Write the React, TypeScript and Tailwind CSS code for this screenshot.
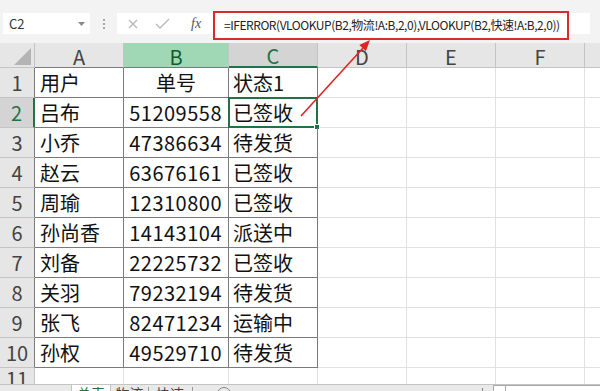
import React from "react";

const data: string[][] = [
  ["用户", "单号", "状态1"],
  ["吕布", "51209558", "已签收"],
  ["小乔", "47386634", "待发货"],
  ["赵云", "63676161", "已签收"],
  ["周瑜", "12310800", "已签收"],
  ["孙尚香", "14143104", "派送中"],
  ["刘备", "22225732", "已签收"],
  ["关羽", "79232194", "待发货"],
  ["张飞", "82471234", "运输中"],
  ["孙权", "49529710", "待发货"],
];

function Toolbar() {
  return (
    <div className="flex h-[43px] items-start bg-[#f3f3f3] pl-[3px] pt-[13px]">
      <div className="flex h-[21px] w-[87px] items-center justify-between bg-white pl-[6px] pr-[5px] text-[13px] text-[#333]">
        <span>C2</span>
        <svg width="7" height="4" viewBox="0 0 7 4">
          <polygon points="0,0 7,0 3.5,4" fill="#8a8a8a" />
        </svg>
      </div>
      <div className="flex h-[21px] w-[27px] flex-col items-center justify-center gap-[2px]">
        <div className="h-[2px] w-[2px] bg-[#a8a8a8]" />
        <div className="h-[2px] w-[2px] bg-[#a8a8a8]" />
        <div className="h-[2px] w-[2px] bg-[#a8a8a8]" />
      </div>
      <div className="flex h-[21px] w-[473px] items-center bg-white">
        <svg className="ml-[11px]" width="10" height="10" viewBox="0 0 10 10">
          <path d="M1 1 L9 9 M9 1 L1 9" stroke="#b8b8b8" strokeWidth="1.3" fill="none" />
        </svg>
        <svg className="ml-[17px]" width="15" height="11" viewBox="0 0 15 11">
          <path d="M1 6 L5 10 L14 1" stroke="#b8b8b8" strokeWidth="1.3" fill="none" />
        </svg>
        <span className="ml-[21px] w-[10px] font-['Liberation_Serif',serif] text-[14px] italic leading-none text-[#555]">
          fx
        </span>
        <div className="-mt-[2px] ml-[12px] flex h-[29px] w-[356px] items-center self-start overflow-hidden border-2 border-[#d92b2b] bg-white pb-[2px] pl-[9px] text-[12px] tracking-[-0.45px] whitespace-nowrap text-[#222]">
          =IFERROR(VLOOKUP(B2,物流!A:B,2,0),VLOOKUP(B2,快速!A:B,2,0))
        </div>
      </div>
    </div>
  );
}

function Grid() {
  const cols = ["A", "B", "C", "D", "E", "F"];
  return (
    <div className="h-[341px] overflow-hidden">
      <div className="grid grid-cols-[35px_89px_105px_89px_89px_89px_89px_15px] grid-rows-[25px_repeat(11,30px)]">
        {/* header row */}
        <div className="flex items-end justify-end border-r border-b border-[#c4c4c4] bg-[#e6e6e6] pr-[2px] pb-[2px]">
          <svg width="18" height="18" viewBox="0 0 18 18">
            <polygon points="0,18 17,18 17,1" fill="#b4b4b4" />
          </svg>
        </div>
        {cols.map((c) => {
          let cls =
            "flex items-center justify-center text-[20px] leading-none border-r border-r-[#c4c4c4] border-b bg-[#e6e6e6] text-[#444] border-b-[#c4c4c4]";
          if (c === "A") cls = "flex items-center justify-center text-[20px] leading-none border-r border-r-[#c4c4c4] border-b border-b-[#7a7a7a] bg-[#e6e6e6] text-[#444]";
          if (c === "B") cls = "flex items-center justify-center text-[20px] leading-none border-r border-r-[#c4c4c4] border-b border-b-[#7a7a7a] bg-[#a0d7b5] text-[#0d5c2f]";
          if (c === "C") cls = "flex items-center justify-center text-[20px] leading-none border-r border-r-[#c4c4c4] border-b-2 border-b-[#217346] bg-[#d4d4d4] text-[#217346]";
          return (
            <div key={c} className={cls}>
              <span className="pt-[3px]">{c}</span>
            </div>
          );
        })}
        <div className="border-b border-[#c4c4c4] bg-[#e6e6e6]" />

        {/* rows */}
        {Array.from({ length: 11 }).map((_, ri) => {
          const r = ri + 1;
          const row = data[ri];
          let hcls =
            "flex items-center justify-center text-[20px] leading-none bg-[#e6e6e6] text-[#444] border-b border-b-[#c4c4c4] border-r border-r-[#7a7a7a]";
          if (r === 2)
            hcls =
              "flex items-center justify-center text-[20px] leading-none bg-[#d4d4d4] text-[#217346] border-b border-b-[#c4c4c4] border-r-2 border-r-[#217346]";
          if (r === 11)
            hcls =
              "flex items-start justify-center text-[20px] leading-none bg-[#e6e6e6] text-[#444] border-r border-r-[#c4c4c4]";
          return (
            <React.Fragment key={r}>
              <div className={hcls}>
                <span className="pt-[1px]">{r}</span>
              </div>
              {[0, 1, 2].map((ci) => {
                if (!row) {
                  return <div key={ci} className="border-r border-b border-[#e1e1e1]" />;
                }
                const val = row[ci];
                let align = "justify-start pl-[5px]";
                if (ci === 1) align = r === 1 ? "justify-center" : "justify-end pr-[6px] tracking-[0.5px]";
                if (ci === 2) align = "justify-start pl-[4px]";
                const active = r === 2 && ci === 2;
                return (
                  <div
                    key={ci}
                    className={`relative flex items-center border-r border-b border-[#7a7a7a] text-[20px] leading-none whitespace-nowrap text-[#111] ${align}`}
                  >
                    <span>{val}</span>
                    {active && (
                      <div className="pointer-events-none absolute -top-[1px] -right-[1px] -bottom-[1px] -left-[1px] border-2 border-[#217346]">
                        <div className="absolute -right-[4px] -bottom-[4px] h-[6px] w-[6px] border border-white bg-[#217346]" />
                      </div>
                    )}
                  </div>
                );
              })}
              <div className="border-r border-b border-[#e1e1e1]" />
              <div className="border-r border-b border-[#e1e1e1]" />
              <div className="border-r border-b border-[#e1e1e1]" />
              <div className="border-b border-[#e1e1e1]" />
            </React.Fragment>
          );
        })}
      </div>
    </div>
  );
}

function Tabs() {
  return (
    <div className="flex h-[7px] overflow-hidden border-t border-[#c4c4c4] bg-[#e9e9e9] text-[14px] leading-[16px]">
      <div className="h-full w-[72px] shrink-0 border-r border-[#c4c4c4]" />
      <div className="flex w-[38px] shrink-0 justify-center bg-white text-[#217346]">总表</div>
      <div className="flex w-[38px] shrink-0 justify-center border-l border-[#c4c4c4] text-[#444]">物流</div>
      <div className="mt-[2px] h-[6px] w-px shrink-0 bg-[#999]" />
      <div className="ml-[7px] shrink-0 text-[#444]">快速</div>
      <div className="mt-[2px] ml-[8px] h-[6px] w-px shrink-0 bg-[#999]" />
      <div className="mt-[2px] ml-[24px] h-[14px] w-[14px] shrink-0 rounded-full border border-[#888]" />
      <div className="flex-1" />
      <div className="mt-[3px] h-[4px] w-px shrink-0 bg-[#888]" />
      <div className="ml-[10px] h-full w-[12px] shrink-0 border-t border-l border-[#aaa] bg-white" />
      <div className="h-full w-[95px] shrink-0 border-t border-l border-[#aaa] bg-white" />
    </div>
  );
}

function Arrow() {
  return (
    <svg
      className="pointer-events-none absolute top-0 left-0"
      width="600"
      height="391"
      viewBox="0 0 600 391"
    >
      <line x1="301" y1="116" x2="363" y2="48" stroke="#e02424" strokeWidth="1.6" />
      <polygon points="370,40 365.9,51.2 359.3,45.1" fill="#e02424" />
    </svg>
  );
}

export default function App() {
  return (
    <div className="relative h-[391px] w-[600px] overflow-hidden bg-white font-['Noto_Sans_CJK_SC','Noto_Sans',sans-serif] text-[#1a1a1a]">
      <Toolbar />
      <Grid />
      <Tabs />
      <Arrow />
    </div>
  );
}
